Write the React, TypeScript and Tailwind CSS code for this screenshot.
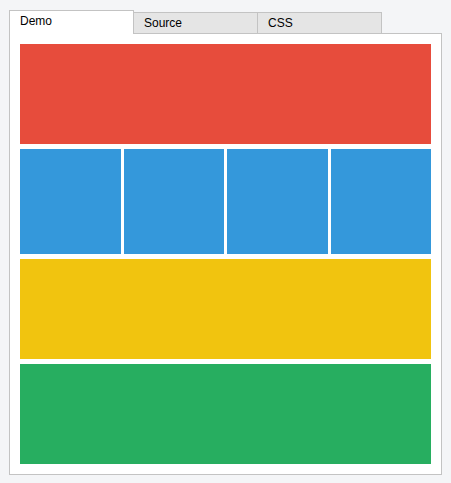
import React from 'react';

const tabs = ['Demo', 'Source', 'CSS'];

const App = () => {
  return (
    <div className="min-h-screen w-[451px] h-[483px] bg-[#f4f5f7] pl-[9px] pt-[10px] font-['Liberation_Sans',Arial,sans-serif] text-[12px] text-black">
      {/* Tabs */}
      <div className="flex items-end h-[23px]">
        {tabs.map((tab, i) =>
          i === 0 ? (
            <div
              key={tab}
              className="relative z-10 w-[125px] h-[24px] -mb-px bg-white border-l border-t border-r border-[#c3c3c3] pl-[10px] pt-[3px] leading-[14px]"
            >
              {tab}
            </div>
          ) : (
            <div
              key={tab}
              className="w-[124px] h-[21px] bg-[#e5e5e5] border-t border-r border-[#c3c3c3] pl-[10px] pt-[3px] leading-[14px]"
            >
              {tab}
            </div>
          )
        )}
      </div>

      {/* Demo panel */}
      <div className="w-[433px] bg-white border border-[#c3c3c3] p-[10px] flex flex-col gap-[5px]">
        <div className="h-[100px] bg-[#e74c3c]" />
        <div className="h-[105px] grid grid-cols-4 gap-[3px]">
          <div className="bg-[#3498db]" />
          <div className="bg-[#3498db]" />
          <div className="bg-[#3498db]" />
          <div className="bg-[#3498db]" />
        </div>
        <div className="h-[100px] bg-[#f1c40f]" />
        <div className="h-[100px] bg-[#27ae60]" />
      </div>
    </div>
  );
};

export default App;
